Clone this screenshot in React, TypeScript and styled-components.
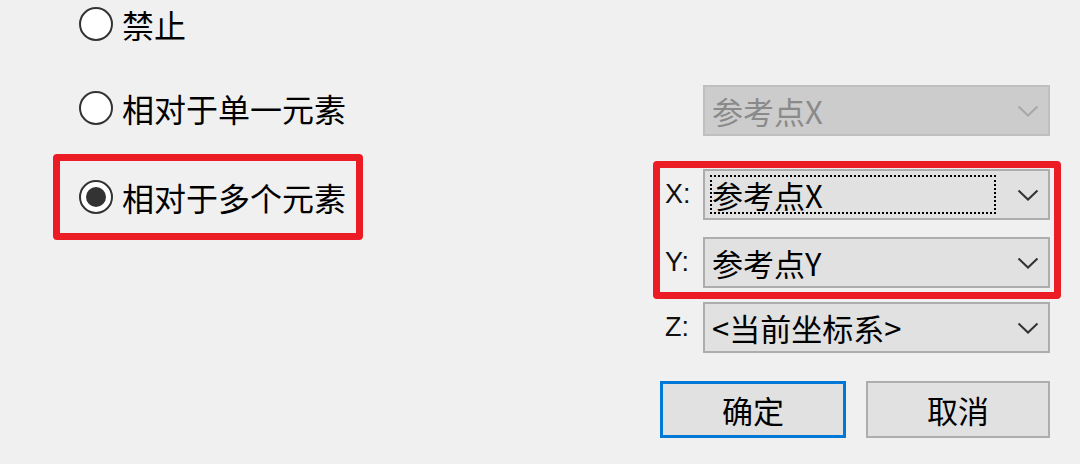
import * as React from "react";
import styled, { createGlobalStyle } from "styled-components";

const GlobalStyle = createGlobalStyle`
  html, body {
    margin: 0;
    padding: 0;
    background: #f0f0f0;
  }
  body {
    font-family: "Noto Sans CJK SC", "Noto Sans", sans-serif;
    color: #000;
  }
`;

interface ComboItem {
    label?: string;
    value: string;
    disabled?: boolean;
    focused?: boolean;
}

function Chevron({ disabled }: { disabled?: boolean }): JSX.Element {
    return (
        <svg width="22" height="12" viewBox="0 0 22 12">
            <path d="M1.5 1.5 L11 10.5 L20.5 1.5" fill="none"
                stroke={ disabled ? "#a8a8a8" : "#333" } strokeWidth="2" />
        </svg>
    );
}

function Combo(props: ComboItem): JSX.Element {
    return (
        <Field>
            <FieldLabel>{ props.label }</FieldLabel>
            <Select disabled={ props.disabled }>
                <SelectText focused={ props.focused }>{ props.value }</SelectText>
                <Arrow>
                    <Chevron disabled={ props.disabled } />
                </Arrow>
            </Select>
        </Field>
    );
}

export default function App(): JSX.Element {
    return (
        <Page>
            <GlobalStyle />
            <Options>
                <RadioRow>
                    <Radio />
                    <RadioText>禁止</RadioText>
                </RadioRow>
                <RadioRow>
                    <Radio />
                    <RadioText>相对于单一元素</RadioText>
                </RadioRow>
                <Highlight>
                    <RadioRow inBox>
                        <Radio checked />
                        <RadioText>相对于多个元素</RadioText>
                    </RadioRow>
                </Highlight>
            </Options>

            <Side>
                <Combo value="参考点X" disabled />
                <HighlightGroup>
                    <Combo label="X:" value="参考点X" focused />
                    <Combo label="Y:" value="参考点Y" />
                </HighlightGroup>
                <Combo label="Z:" value="<当前坐标系>" />
                <Buttons>
                    <Button primary>确定</Button>
                    <Button>取消</Button>
                </Buttons>
            </Side>
        </Page>
    );
}

const Page = styled.div`
  display: flex;
  width: 1080px;
  height: 464px;
  overflow: hidden;
  background: #f0f0f0;
`;

const Options = styled.div`
  flex: 1;
  display: flex;
  flex-direction: column;
  padding-left: 53px;
`;

const RadioRow = styled.div<{ inBox?: boolean }>`
  display: flex;
  align-items: center;
  height: ${ p => p.inBox ? "72px" : "48px" };
  padding-left: ${ p => p.inBox ? "19px" : "26px" };
  margin-bottom: ${ p => p.inBox ? "0" : "36px" };

  &:nth-child(2) {
    margin-bottom: 22px;
  }
`;

const Radio = styled.span<{ checked?: boolean }>`
  position: relative;
  box-sizing: border-box;
  width: 34px;
  height: 34px;
  border-radius: 50%;
  border: 2px solid #333;
  background: #fff;
  flex-shrink: 0;

  &::after {
    content: "";
    display: ${ p => p.checked ? "block" : "none" };
    position: absolute;
    left: 5px;
    top: 5px;
    width: 20px;
    height: 20px;
    border-radius: 50%;
    background: #333;
  }
`;

const RadioText = styled.span`
  margin-left: 9px;
  font-size: 32px;
  line-height: 34px;
  white-space: nowrap;
`;

const Highlight = styled.div`
  box-sizing: border-box;
  width: 310px;
  height: 86px;
  border: 7px solid #ec1c24;
  border-radius: 4px;
`;

const Side = styled.div`
  width: 408px;
  margin-right: 19px;
  padding-top: 85px;
  display: flex;
  flex-direction: column;
`;

const HighlightGroup = styled.div`
  margin-top: 25px;
  margin-bottom: 3px;
  border: 7px solid #ec1c24;
  border-radius: 4px;
  padding: 1px 0 4px;
  display: flex;
  flex-direction: column;
  gap: 17px;

  & > div {
    padding: 0 4px 0 5px;
  }
`;

const Field = styled.div`
  display: flex;
  align-items: center;
  padding: 0 11px 0 12px;
`;

const FieldLabel = styled.span`
  width: 38px;
  font-size: 27px;
  font-family: "Liberation Sans", "Noto Sans", sans-serif;
  color: #111;
`;

const Select = styled.div<{ disabled?: boolean }>`
  box-sizing: border-box;
  flex: 1;
  height: 51px;
  display: flex;
  align-items: center;
  padding-left: 5px;
  background: ${ p => p.disabled ? "#cccccc" : "#e1e1e1" };
  border: 2px solid ${ p => p.disabled ? "#bfbfbf" : "#adadad" };
  color: ${ p => p.disabled ? "#8a8a8a" : "#000" };
`;

const SelectText = styled.span<{ focused?: boolean }>`
  box-sizing: border-box;
  flex: 1;
  height: 39px;
  display: flex;
  align-items: center;
  padding-left: 0;
  font-size: 31px;
  white-space: nowrap;
  border: 2px dotted ${ p => p.focused ? "#000" : "transparent" };
`;

const Arrow = styled.span`
  box-sizing: border-box;
  width: 52px;
  display: flex;
  justify-content: flex-end;
  align-items: center;
  padding-right: 9px;
`;

const Buttons = styled.div`
  display: flex;
  gap: 20px;
  margin-top: 28px;
  padding: 0 11px 0 7px;
`;

const Button = styled.button<{ primary?: boolean }>`
  box-sizing: border-box;
  flex: 1;
  height: 57px;
  background: #e1e1e1;
  border: ${ p => p.primary ? "3px solid #0078d7" : "2px solid #adadad" };
  font-family: "Noto Sans CJK SC", sans-serif;
  font-size: 31px;
  color: #000;
  padding: 0;
`;
